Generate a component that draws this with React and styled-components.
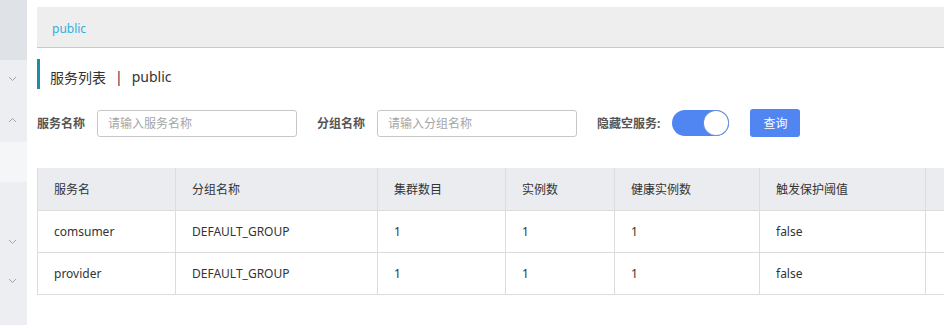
import React from "react";
import styled, { createGlobalStyle } from "styled-components";

const GlobalStyle = createGlobalStyle`
  html, body {
    margin: 0;
    padding: 0;
    background: #fff;
    font-family: "Noto Sans", "Noto Sans CJK SC", sans-serif;
    font-size: 12px;
    color: #333;
  }
`;

const Page = styled.div`
  display: flex;
  width: 944px;
  height: 325px;
  overflow: hidden;
`;

const Sidebar = styled.aside`
  width: 27px;
  flex-shrink: 0;
  display: flex;
  flex-direction: column;
  background: #eceef1;
`;

const SideBlock = styled.div`
  height: ${(p) => p.h}px;
  background: ${(p) => p.bg || "transparent"};
  display: flex;
  align-items: center;
  justify-content: center;
  padding-right: 2px;
`;

const Main = styled.main`
  flex: 1;
  min-width: 0;
  padding: 7px 0 0 10px;
  overflow: hidden;
`;

const Breadcrumb = styled.div`
  box-sizing: border-box;
  height: 41px;
  display: flex;
  align-items: center;
  padding: 3px 0 0 15px;
  background: #eeeeee;
  border-bottom: 1px solid #c9c9c9;
  color: #2eaed9;
  font-size: 12px;
`;

const Title = styled.h1`
  box-sizing: border-box;
  margin: 11px 0 0;
  height: 30px;
  display: flex;
  align-items: center;
  padding: 5px 0 0 10px;
  border-left: 3px solid #1b8ea3;
  font-size: 14px;
  font-weight: normal;
  color: #333;
`;

const Sep = styled.span`
  margin: 0 9px;
`;

const FormRow = styled.div`
  margin-top: 20px;
  display: flex;
  align-items: center;
  height: 28px;
`;

const Label = styled.label`
  font-weight: bold;
  color: #555;
  margin-right: 12px;
  white-space: nowrap;
`;

const Input = styled.input`
  box-sizing: border-box;
  width: 200px;
  height: 27px;
  border: 1px solid #c6c6c6;
  border-radius: 3px;
  padding: 0 10px;
  margin-right: 20px;
  font: inherit;
  color: #333;
  outline: none;
  &::placeholder {
    color: #a6a6a6;
  }
`;

const Switch = styled.div`
  box-sizing: border-box;
  width: 57px;
  height: 26px;
  border-radius: 13px;
  background: #4f86f2;
  display: flex;
  justify-content: ${(p) => (p.on ? "flex-end" : "flex-start")};
  align-items: center;
  padding: 1px;
  margin-right: 21px;
`;

const Knob = styled.span`
  width: 24px;
  height: 24px;
  border-radius: 50%;
  background: #fff;
  box-shadow: 0 0 0 1px #6f8fd8;
`;

const Button = styled.button`
  width: 50px;
  height: 28px;
  border: none;
  border-radius: 3px;
  background: #5085f2;
  color: #fff;
  font: inherit;
  font-size: 12px;
`;

const TableWrap = styled.div`
  margin-top: 31px;
  width: 1000px;
`;

const Table = styled.table`
  border-collapse: collapse;
  table-layout: fixed;
  width: 1000px;
  border-left: 1px solid #dcdcdc;
`;

const Th = styled.th`
  height: 42px;
  padding: 0 16px;
  text-align: left;
  font-weight: normal;
  color: #333;
  background: #ebecf0;
  border-right: 1px solid #dcdcdc;
  border-bottom: 1px solid #dcdcdc;
  box-sizing: border-box;
`;

const Td = styled.td`
  height: 42px;
  padding: 0 16px;
  color: #333;
  border-right: 1px solid #dcdcdc;
  border-bottom: 1px solid #dcdcdc;
  box-sizing: border-box;
`;

const Chevron = ({ up }) => (
  <svg width="9" height="6" viewBox="0 0 9 6">
    <polyline
      points={up ? "1,5 4.5,1.5 8,5" : "1,1 4.5,4.5 8,1"}
      fill="none"
      stroke="#a0a4aa"
      strokeWidth="1"
    />
  </svg>
);

const columns = [
  { title: "服务名", width: 138 },
  { title: "分组名称", width: 202 },
  { title: "集群数目", width: 128 },
  { title: "实例数", width: 109 },
  { title: "健康实例数", width: 145 },
  { title: "触发保护阈值", width: 166 },
  { title: "", width: 112 },
];

const rows = [
  ["comsumer", "DEFAULT_GROUP", "1", "1", "1", "false", ""],
  ["provider", "DEFAULT_GROUP", "1", "1", "1", "false", ""],
];

const App = () => {
  return (
    <>
      <GlobalStyle />
      <Page>
        <Sidebar>
          <SideBlock h={60} bg="#dfe2e7" />
          <SideBlock h={38}>
            <Chevron />
          </SideBlock>
          <SideBlock h={44}>
            <Chevron up />
          </SideBlock>
          <SideBlock h={40} bg="#f5f6f8" />
          <SideBlock h={40} />
          <SideBlock h={40}>
            <Chevron />
          </SideBlock>
          <SideBlock h={38}>
            <Chevron />
          </SideBlock>
        </Sidebar>

        <Main>
          <Breadcrumb>public</Breadcrumb>
          <Title>
            服务列表<Sep>|</Sep>public
          </Title>

          <FormRow>
            <Label>服务名称</Label>
            <Input placeholder="请输入服务名称" />
            <Label>分组名称</Label>
            <Input placeholder="请输入分组名称" />
            <Label>隐藏空服务:</Label>
            <Switch on>
              <Knob />
            </Switch>
            <Button>查询</Button>
          </FormRow>

          <TableWrap>
            <Table>
              <colgroup>
                {columns.map((c, i) => (
                  <col key={i} style={{ width: c.width }} />
                ))}
              </colgroup>
              <thead>
                <tr>
                  {columns.map((c, i) => (
                    <Th key={i}>{c.title}</Th>
                  ))}
                </tr>
              </thead>
              <tbody>
                {rows.map((r, i) => (
                  <tr key={i}>
                    {r.map((cell, j) => (
                      <Td key={j}>{cell}</Td>
                    ))}
                  </tr>
                ))}
              </tbody>
            </Table>
          </TableWrap>
        </Main>
      </Page>
    </>
  );
};

export default App;
